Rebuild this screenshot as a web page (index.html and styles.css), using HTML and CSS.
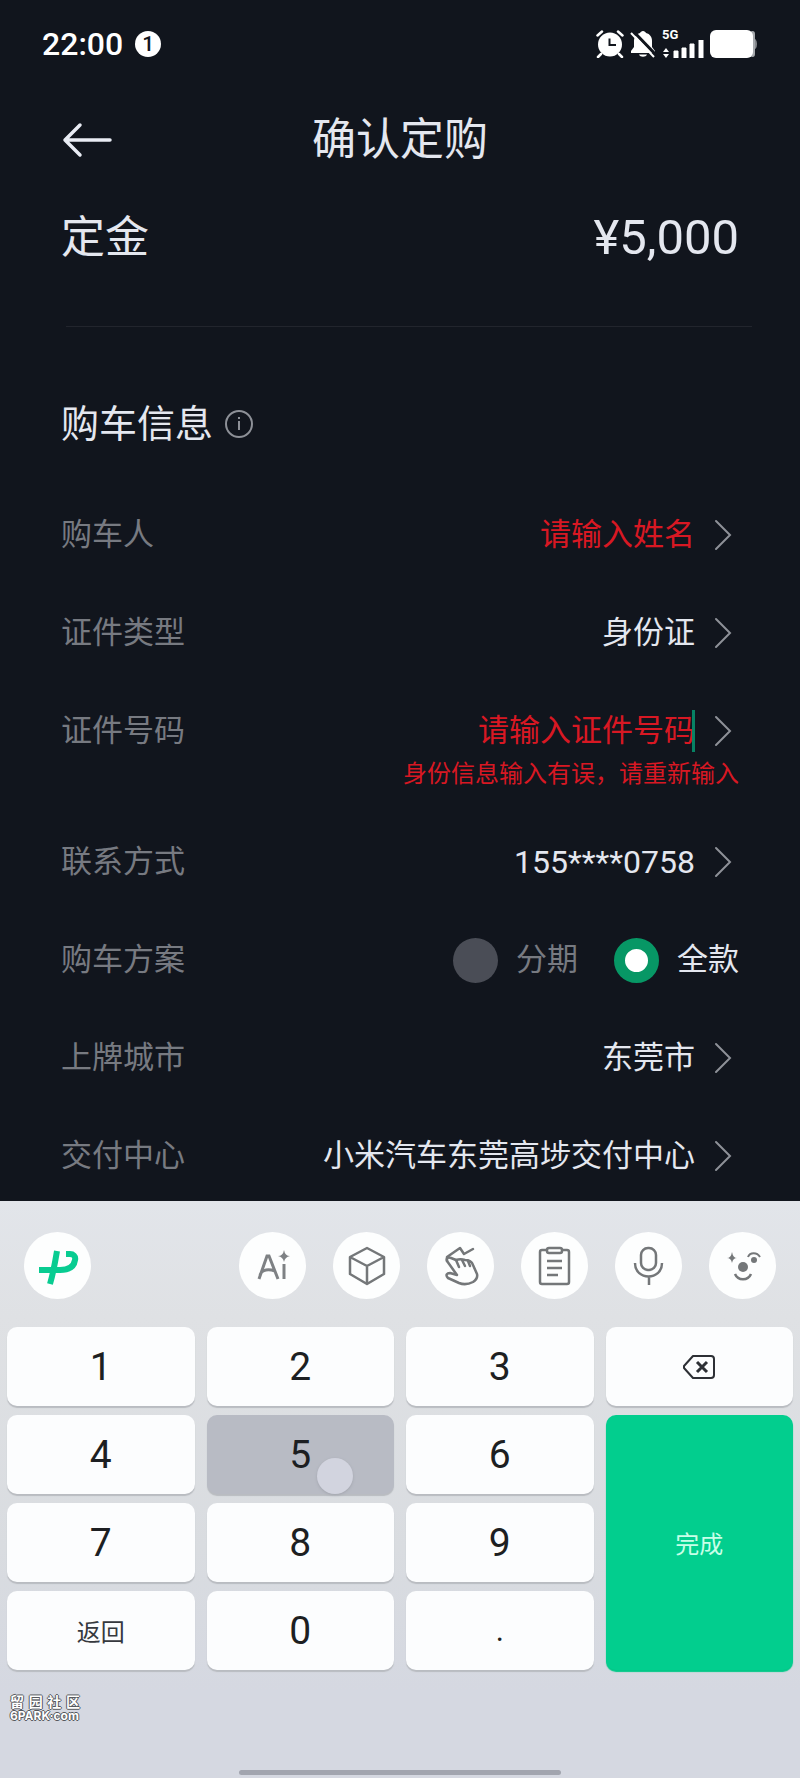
FILE: index.html
```html
<!DOCTYPE html>
<html lang="zh-CN">
<head>
<meta charset="utf-8">
<meta name="viewport" content="width=device-width, initial-scale=1">
<title>确认定购</title>
<link rel="stylesheet" href="styles.css">
</head>
<body>
<div class="screen">
  <div class="status-bar">
    <div class="status-left">
      <span class="clock">22:00</span>
      <span class="notice-count">1</span>
    </div>
    <div class="status-right">
      <svg class="status-icon" width="28" height="28" viewBox="0 0 28 28" aria-hidden="true">
        <circle cx="14" cy="14.500" r="12" fill="#fff"/>
        <path d="M1.500 5.500L6 1.500M26.500 5.500L22 1.500M5 24l-3 3M23 24l3 3" stroke="#fff" stroke-width="2.500" stroke-linecap="round"/>
        <path d="M13.500 8.500v6.500h6.500" stroke="#11151d" stroke-width="2" fill="none"/>
      </svg>
      <svg class="status-icon" width="26" height="28" viewBox="0 0 26 28" aria-hidden="true">
        <path d="M13 1c1.500 0 2.500 1 3 2 4 1 6 4 6 8v6l3 4v2H1v-2l3-4v-6c0-4 2-7 6-8 .5-1 1.500-2 3-2zM9 24.500h8c-1 3-7 3-8 0z" fill="#fff"/>
        <path d="M3 1L26 25" stroke="#11151d" stroke-width="3"/>
        <path d="M1 3L24 27" stroke="#fff" stroke-width="2"/>
      </svg>
      <div class="network">
        <span class="network-type">5G</span>
        <svg width="42" height="18" viewBox="0 0 42 18" aria-hidden="true">
          <path d="M1 12l3-4 3 4zM1 14l3 4 3-4z" fill="#fff"/>
          <path d="M12 11h4v7h-4zM20 8h4v10h-4zM28 4h4v14h-4zM37 0h4v18h-4z" fill="#fff" stroke="#fff"/>
        </svg>
      </div>
      <svg class="battery" width="48" height="28" viewBox="0 0 48 28" aria-hidden="true">
        <path d="M42 8q5 0 5 6t-5 6z" fill="#85888d"/>
        <rect x="40" y="1" width="5" height="26" rx="3" fill="#a5a8ac"/>
        <rect x="0" y="0" width="43" height="28" rx="6" fill="#fff"/>
      </svg>
    </div>
  </div>

  <header class="page-header">
    <button class="back-button" type="button" aria-label="返回上一页">
      <svg width="50" height="36" viewBox="0 0 50 36" fill="none" stroke="#e9ecf4" stroke-width="3.500" stroke-linecap="round" stroke-linejoin="round" aria-hidden="true"><path d="M48 18H3M18 3L3 18l15 15"/></svg>
    </button>
    <h1 class="page-title">确认定购</h1>
  </header>

  <main class="content">
    <div class="deposit">
      <span class="deposit-label">定金</span>
      <span class="deposit-amount">¥5,000</span>
    </div>
    <hr class="divider">

    <div class="section-head">
      <h2 class="section-title">购车信息</h2>
      <button class="info-button" type="button" aria-label="说明">
        <svg width="30" height="30" viewBox="0 0 30 30" fill="none" stroke="#8d9097" stroke-width="2" aria-hidden="true"><circle cx="15" cy="15" r="13"/><path d="M15 12v9M15 8v2"/></svg>
      </button>
    </div>

    <form class="info-form">
      <div class="row">
        <label class="row-label" for="buyer">购车人</label>
        <input class="row-input" id="buyer" type="text" placeholder="请输入姓名">
        <svg class="chevron" viewBox="0 0 18 32" aria-hidden="true"><path d="M2 2l14 14L2 30"/></svg>
      </div>
      <div class="row">
        <span class="row-label" id="type-label">证件类型</span>
        <button class="row-value" type="button" aria-labelledby="type-label type-value">
          <span id="type-value">身份证</span>
          <svg class="chevron" viewBox="0 0 18 32" aria-hidden="true"><path d="M2 2l14 14L2 30"/></svg>
        </button>
      </div>
      <div class="row-group">
        <div class="row row-compact">
          <label class="row-label" for="id-number">证件号码</label>
          <div class="caret-field">
            <input class="row-input" id="id-number" type="text" inputmode="numeric" placeholder="请输入证件号码" aria-describedby="id-error" aria-invalid="true">
            <span class="caret"></span>
          </div>
          <svg class="chevron" viewBox="0 0 18 32" aria-hidden="true"><path d="M2 2l14 14L2 30"/></svg>
        </div>
        <p class="row-error" id="id-error">身份信息输入有误，请重新输入</p>
      </div>
      <div class="row">
        <span class="row-label" id="phone-label">联系方式</span>
        <button class="row-value" type="button" aria-labelledby="phone-label phone-value">
          <span class="phone" id="phone-value">155****0758</span>
          <svg class="chevron" viewBox="0 0 18 32" aria-hidden="true"><path d="M2 2l14 14L2 30"/></svg>
        </button>
      </div>
      <div class="row" role="radiogroup" aria-labelledby="plan-label">
        <span class="row-label" id="plan-label">购车方案</span>
        <div class="options">
          <label class="option"><input class="option-radio" type="radio" name="plan"><span class="option-text">分期</span></label>
          <label class="option"><input class="option-radio" type="radio" name="plan" checked><span class="option-text">全款</span></label>
        </div>
      </div>
      <div class="row">
        <span class="row-label" id="city-label">上牌城市</span>
        <button class="row-value" type="button" aria-labelledby="city-label city-value">
          <span id="city-value">东莞市</span>
          <svg class="chevron" viewBox="0 0 18 32" aria-hidden="true"><path d="M2 2l14 14L2 30"/></svg>
        </button>
      </div>
      <div class="row">
        <span class="row-label" id="center-label">交付中心</span>
        <button class="row-value" type="button" aria-labelledby="center-label center-value">
          <span id="center-value">小米汽车东莞高埗交付中心</span>
          <svg class="chevron" viewBox="0 0 18 32" aria-hidden="true"><path d="M2 2l14 14L2 30"/></svg>
        </button>
      </div>
    </form>
  </main>

  <section class="keyboard" aria-label="数字键盘">
    <div class="toolbar">
      <button class="tool tool-brand" type="button" aria-label="输入法">
        <svg width="44" height="40" viewBox="0 0 44 40" fill="none" stroke="#08cc91" stroke-width="6" aria-hidden="true">
          <path d="M21 5C19 17 17 28 14 38"/><path d="M3 24h21c8 0 14-3 15-10 1-4-2-6-5-6h-4"/>
        </svg>
      </button>
      <button class="tool" type="button" aria-label="AI">
        <svg width="40" height="40" viewBox="0 0 40 40" fill="none" stroke="#7e8184" stroke-width="3" aria-hidden="true">
          <path d="M6 33L14 10h2l9 23M7 29c2-6 9-6 15-4M31 18v15"/><path d="M31 4q1 6 6 6-5 1-6 6-1-5-6-6 5 0 6-6z" fill="#7e8184" stroke="none"/>
        </svg>
      </button>
      <button class="tool" type="button" aria-label="立方体">
        <svg width="40" height="40" viewBox="0 0 40 40" fill="none" stroke="#747779" stroke-width="2.500" stroke-linejoin="round" aria-hidden="true">
          <path d="M20 2l17 9v17l-17 10L3 28V11zM3 11l17 9 17-9M20 20v18"/>
        </svg>
      </button>
      <button class="tool" type="button" aria-label="手势">
        <svg width="40" height="40" viewBox="0 0 40 40" fill="none" stroke="#747779" stroke-width="2.500" stroke-linejoin="round" stroke-linecap="round" aria-hidden="true">
          <path d="M32 3l-9 5-4-6L6 11v4"/><path d="M16 29L6 15c-1-3 1-4 4-3l5 2c3-1 6-1 9 0 4 0 7 2 8 5l4 9c1 4-1 6-4 8-4 2-9 3-14 1L7 32c-3-3-1-5 2-5z"/><path d="M15 14l3 7M21 14l3 6M27 15l2 5"/>
        </svg>
      </button>
      <button class="tool" type="button" aria-label="剪贴板">
        <svg width="40" height="40" viewBox="0 0 40 40" fill="none" stroke="#747779" stroke-width="2.500" aria-hidden="true">
          <path d="M12 4H7q-2 0-2 2v30q0 2 2 2h25q2 0 2-2V6q0-2-2-2h-5"/><rect x="12" y="2" width="15" height="5" rx="2"/><path d="M12 15h15M12 22h15M12 29h11"/>
        </svg>
      </button>
      <button class="tool" type="button" aria-label="语音">
        <svg width="40" height="40" viewBox="0 0 40 40" fill="none" stroke="#747779" stroke-width="2.500" aria-hidden="true">
          <rect x="12" y="2" width="15" height="22" rx="7"/><path d="M6 17c0 18 27 18 27 0M20 30v9"/>
        </svg>
      </button>
      <button class="tool" type="button" aria-label="表情">
        <svg width="40" height="40" viewBox="0 0 40 40" fill="none" stroke="#747779" stroke-width="2.500" aria-hidden="true">
          <circle cx="20" cy="21" r="5" fill="#747779" stroke="none"/><circle cx="31" cy="14" r="3" fill="#747779" stroke="none"/>
          <path d="M9 6q1 6 5 6-4 0-5 5-1-5-5-5 4 0 5-6z" fill="#747779" stroke="none"/><path d="M25 11c2-5 9-5 12 0" stroke-width="2"/><path d="M12 28c3 7 13 7 16 0"/>
        </svg>
      </button>
    </div>

    <div class="keys">
      <button class="key" type="button">1</button>
      <button class="key" type="button">2</button>
      <button class="key" type="button">3</button>
      <button class="key" type="button" aria-label="删除">
        <svg width="34" height="26" viewBox="0 0 34 26" fill="none" stroke="#2d3035" stroke-width="2" stroke-linejoin="round" aria-hidden="true"><path d="M11 2h18q3 0 3 3v16q0 3-3 3H11L2 14v-2z"/><path d="M15 8l10 10M25 8L15 18" stroke-width="3"/></svg>
      </button>
      <button class="key" type="button">4</button>
      <button class="key key-pressed" type="button">5<span class="touch-dot"></span></button>
      <button class="key" type="button">6</button>
      <button class="key key-done" type="button">完成</button>
      <button class="key" type="button">7</button>
      <button class="key" type="button">8</button>
      <button class="key" type="button">9</button>
      <button class="key key-text" type="button">返回</button>
      <button class="key" type="button">0</button>
      <button class="key key-dot" type="button">.</button>
    </div>

    <div class="watermark">
      <div class="watermark-name"><span>留</span><span>园</span><span>社</span><span>区</span></div>
      <div class="watermark-site">6PARK·com</div>
    </div>
    <div class="home-indicator"></div>
  </section>
</div>
</body>
</html>
```
FILE: styles.css
```css
* {
  box-sizing: border-box;
}

body {
  margin: 0;
  background: #11151d;
  color: #e4e7ef;
  font-family: Roboto, "Noto Sans CJK SC", sans-serif;
}

button,
input {
  margin: 0;
  padding: 0;
  border: 0;
  background: none;
  color: inherit;
  font: inherit;
}

svg {
  display: block;
  flex: none;
}

.screen {
  display: flex;
  flex-direction: column;
  min-height: 100vh;
}

/* Status bar */
.status-bar {
  display: flex;
  align-items: center;
  justify-content: space-between;
  height: 88px;
  padding: 0 42px;
  color: #fff;
}

.status-left {
  display: flex;
  align-items: center;
  gap: 12px;
}

.clock {
  font-size: 32px;
  font-weight: 500;
  line-height: 36px;
}

.notice-count {
  width: 26px;
  height: 26px;
  border-radius: 50%;
  background: #fff;
  color: #11151d;
  font-size: 21px;
  font-weight: 500;
  line-height: 26px;
  text-align: center;
}

.status-right {
  display: flex;
  align-items: center;
  gap: 6px;
}

.network {
  display: flex;
  flex-direction: column;
}

.network-type {
  font-size: 13px;
  font-weight: 700;
  line-height: 10px;
}

/* Header */
.page-header {
  display: grid;
  grid-template-columns: 1fr auto 1fr;
  align-items: center;
  height: 104px;
  padding: 0 62px;
}

.back-button {
  justify-self: start;
}

.page-title {
  margin: 0;
  font-size: 44px;
  font-weight: 400;
  line-height: 64px;
}

/* Order details */
.content {
  padding: 0 61px;
}

.deposit {
  display: flex;
  align-items: center;
  justify-content: space-between;
  height: 92px;
  line-height: 64px;
}

.deposit-label {
  font-size: 44px;
}

.deposit-amount {
  font-size: 49px;
}

.divider {
  height: 1px;
  margin: 42px -13px 69px 5px;
  border: 0;
  background: #22252d;
}

.section-head {
  display: flex;
  align-items: center;
  gap: 11px;
  height: 56px;
  margin-bottom: 34px;
}

.section-title {
  margin: 0;
  font-size: 38px;
  font-weight: 400;
  line-height: 50px;
}

.row {
  display: flex;
  align-items: center;
  justify-content: space-between;
  min-height: 98px;
  font-size: 31px;
  line-height: 38px;
}

.row-label {
  flex: none;
  color: #777a81;
}

.row-input {
  flex: 1;
  width: 100%;
  min-width: 0;
  height: 38px;
  text-align: right;
  outline: 0;
}

.row-input::placeholder {
  color: #d81823;
  opacity: 1;
}

.row-value {
  display: flex;
  align-items: center;
}

.phone {
  font-size: 32px;
}

.chevron {
  width: 18px;
  height: 32px;
  margin: 0 7px 0 19px;
  fill: none;
  stroke: #8e9198;
  stroke-width: 2;
  stroke-linecap: round;
}

.row-group {
  padding: 30px 0 21px;
}

.row-compact {
  min-height: 38px;
}

.caret-field {
  position: relative;
  display: flex;
  flex: 1;
}

.caret {
  position: absolute;
  top: -2px;
  right: 0;
  width: 3px;
  height: 42px;
  background: #078264;
}

.row-error {
  margin: 6px 0 0;
  color: #d81823;
  font-size: 24px;
  line-height: 36px;
  text-align: right;
}

.options {
  display: flex;
  gap: 36px;
}

.option {
  display: flex;
  align-items: center;
  gap: 18px;
  color: #777a81;
}

.option:has(:checked) {
  color: #e4e7ef;
}

.option-radio {
  width: 45px;
  height: 45px;
  border-radius: 50%;
  background: #4a4d56;
  appearance: none;
}

.option-radio:checked {
  border: 11px solid #079765;
  background: #fff;
}

/* Keyboard, drawn over the lower edge of the form */
.keyboard {
  position: relative;
  display: flex;
  flex: 1;
  flex-direction: column;
  margin-top: -4px;
  padding: 31px 7px 3px;
  background: linear-gradient(#e2e5ea, #dfe1e4 20%, #d9dce0 60%, #d5d8e1 85%);
}

.toolbar {
  display: flex;
  gap: 27px;
  margin-bottom: 28px;
  padding: 0 17px;
}

.tool {
  display: flex;
  align-items: center;
  justify-content: center;
  width: 67px;
  height: 67px;
  border-radius: 50%;
  background: #fdfefe;
}

.tool-brand {
  margin-right: auto;
}

.keys {
  display: grid;
  grid-template-columns: repeat(4, 1fr);
  grid-auto-rows: 79px;
  gap: 9px 12px;
}

.key {
  position: relative;
  display: flex;
  align-items: center;
  justify-content: center;
  border-radius: 10px;
  background: #fcfdfe;
  box-shadow: 0 2px 1px #b9bcc1;
  color: #1d1f22;
  font-size: 39px;
}

.key-pressed {
  background: #b8bbc4;
}

.touch-dot {
  position: absolute;
  right: 41px;
  bottom: 0;
  width: 36px;
  height: 36px;
  border-radius: 50%;
  background: #d2d4df;
  box-shadow: 0 1px 3px #a2a5ae;
}

.key-done {
  grid-row: span 3;
  background: #02ce8e;
  box-shadow: 0 2px 1px #02c888;
  color: #c8ffe8;
  font-size: 24px;
}

.key-text {
  color: #36393e;
  font-size: 24px;
}

.key-dot {
  font-size: 31px;
}

.watermark {
  width: 70px;
  margin: 24px 0 0 3px;
  color: #fff;
  text-shadow: 1px 0 #55585d, -1px 0 #55585d, 0 1px #55585d, 0 -1px #55585d;
}

.watermark-name {
  display: flex;
  justify-content: space-between;
  font-size: 14px;
  font-weight: 700;
  line-height: 16px;
}

.watermark-site {
  font-family: Inter, sans-serif;
  font-size: 12px;
  font-weight: 700;
  line-height: 12px;
}

.home-indicator {
  width: 41%;
  height: 5px;
  margin: auto auto 0;
  border-radius: 3px;
  background: #a2a5af;
}
```
